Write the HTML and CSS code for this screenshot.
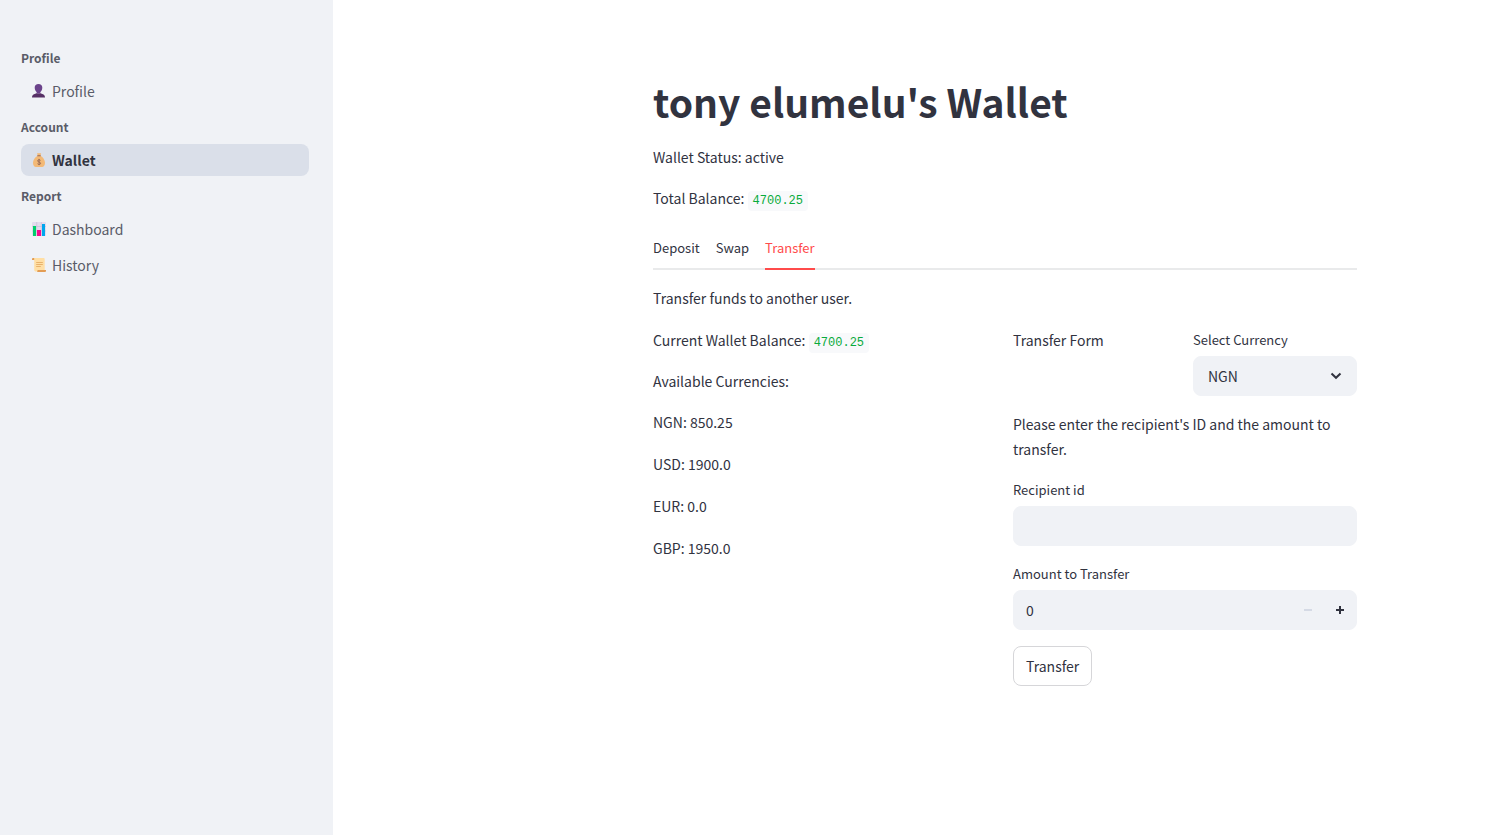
FILE: index.html
```html
<!DOCTYPE html>
<html lang="en">
<head>
<meta charset="utf-8">
<meta name="viewport" content="width=device-width, initial-scale=1">
<title>Wallet</title>
<link rel="stylesheet" href="styles.css">
</head>
<body>
<div class="app">
  <nav class="sidebar" aria-label="Main">
    <section class="nav-group">
      <h2 class="nav-heading">Profile</h2>
      <a class="nav-link" href="#profile">
        <svg class="nav-icon" viewBox="0 0 14 14" aria-hidden="true"><path fill="#6b438b" d="M6.500 0C4.200 0 2.700 1.300 2.700 3.600c0 1.900.8 3.700 2 4.600L4.500 9.700h4l-.2-1.500c1.200-.9 2-2.700 2-4.600C10.300 1.300 8.800 0 6.500 0z"/><path fill="#563065" d="M4.500 9.200 2 10.200C.7 10.800 0 12 0 13.500h13c0-1.500-.7-2.700-2-3.300L8.500 9.200c-1 .8-3 .8-4 0z"/></svg>
        <span>Profile</span>
      </a>
    </section>
    <section class="nav-group">
      <h2 class="nav-heading">Account</h2>
      <a class="nav-link nav-link-active" href="#wallet" aria-current="page">
        <svg class="nav-icon" viewBox="0 0 14 14" aria-hidden="true"><path fill="#f3b976" d="m5 0 1 .4L7 0l1 .4L9.200 0 8.500 2.700C11 4 13 7 13 9.800c0 2.700-1.200 4.200-3 4.200H4c-1.800 0-3-1.500-3-4.200C1 7 3 4 5.700 2.700z"/><rect x="5.200" y="2.200" width="3.600" height="1.100" rx=".5" fill="#9b6a55"/><path fill="none" stroke="#9b6a55" stroke-width="1" d="M8.500 7.400C8 6.500 5.600 6.500 5.600 7.900c0 1.500 3 .8 3 2.400 0 1.500-2.500 1.500-3.100.4M7.100 5.900v6.200"/></svg>
        <span>Wallet</span>
      </a>
    </section>
    <section class="nav-group">
      <h2 class="nav-heading">Report</h2>
      <a class="nav-link" href="#dashboard">
        <svg class="nav-icon" viewBox="0 0 14 14" aria-hidden="true"><rect width="14" height="14" rx="1" fill="#e3dced"/><path fill="none" stroke="#c9bed8" stroke-width=".7" d="M0 4.500h14M0 9h14M4.700 0v14M9.300 0v14"/><path fill="#00cf6c" d="M1 4h3v10H1z"/><path fill="#f70a8d" d="M5 8h4v6H5z"/><path fill="#00a6ed" d="M10 2h3v12h-3z"/></svg>
        <span>Dashboard</span>
      </a>
      <a class="nav-link" href="#history">
        <svg class="nav-icon" viewBox="0 0 14 14" aria-hidden="true"><path fill="#e39d54" d="M0 1.200C0 .4.500 0 1.300 0H4v2H0z"/><path fill="#ffdfa5" d="M2 0h9.500c.8 0 1.200.5 1.200 1.200V13.500H4c-1.200 0-1.800-.6-1.800-1.800V1.300C2.200.6 2.300.3 2 0z"/><path fill="#e39d54" d="M5.500 12H14v.8c0 .8-.5 1.200-1.200 1.200H5c.5-.5.700-1.200.5-2z"/><path fill="none" stroke="#e8b26b" stroke-width="1" d="M4.200 4.500h6.600M4.200 6.500h6.600M4.200 8.500h4.600"/></svg>
        <span>History</span>
      </a>
    </section>
  </nav>

  <main class="main">
    <div class="content">
      <h1 class="title">tony elumelu's Wallet</h1>
      <p>Wallet Status: active</p>
      <p>Total Balance: <code class="amount">4700.25</code></p>

      <div class="tabs" role="tablist">
        <button class="tab" type="button" role="tab" aria-selected="false">Deposit</button>
        <button class="tab" type="button" role="tab" aria-selected="false">Swap</button>
        <button class="tab tab-active" type="button" role="tab" aria-selected="true">Transfer</button>
      </div>

      <div class="panel" role="tabpanel">
        <p>Transfer funds to another user.</p>

        <div class="columns">
          <section class="stack">
            <p>Current Wallet Balance: <code class="amount">4700.25</code></p>
            <p>Available Currencies:</p>
            <ul class="currencies">
              <li>NGN: 850.25</li>
              <li>USD: 1900.0</li>
              <li>EUR: 0.0</li>
              <li>GBP: 1950.0</li>
            </ul>
          </section>

          <form class="stack">
            <div class="columns">
              <p>Transfer Form</p>
              <div class="field">
                <label class="label" for="currency">Select Currency</label>
                <div class="control">
                  <select class="select" id="currency">
                    <option>NGN</option>
                    <option>USD</option>
                    <option>EUR</option>
                    <option>GBP</option>
                  </select>
                  <svg class="chevron" viewBox="0 0 12 8" aria-hidden="true"><path d="m1.500 1.500 4.500 4.300 4.500-4.300"/></svg>
                </div>
              </div>
            </div>
            <p>Please enter the recipient's ID and the amount to transfer.</p>
            <div class="field">
              <label class="label" for="recipient">Recipient id</label>
              <div class="control"><input class="input" id="recipient" type="text"></div>
            </div>
            <div class="field">
              <label class="label" for="amount">Amount to Transfer</label>
              <div class="control">
                <input class="input" id="amount" type="text" inputmode="numeric" value="0">
                <button class="step" type="button" aria-label="Decrease" disabled><svg class="step-icon" viewBox="0 0 8 8" aria-hidden="true"><path d="M0 3h8v2H0z"/></svg></button>
                <button class="step" type="button" aria-label="Increase"><svg class="step-icon" viewBox="0 0 8 8" aria-hidden="true"><path d="M3 0h2v3h3v2H5v3H3V5H0V3h3z"/></svg></button>
              </div>
            </div>
            <button class="submit" type="button">Transfer</button>
          </form>
        </div>
      </div>
    </div>
  </main>
</div>
</body>
</html>
```
FILE: styles.css
```css
* {
  box-sizing: border-box;
}

body {
  margin: 0;
  background: #fff;
  color: #31333f;
  font: 14px/25px "Noto Sans CJK SC", "Noto Sans", sans-serif;
}

h1, h2, p, ul {
  margin: 0;
}

button, input, select {
  margin: 0;
  padding: 0;
  border: 0;
  background: none;
  color: inherit;
  font: inherit;
}

.app {
  display: flex;
  min-height: 100vh;
}

.sidebar {
  flex: 0 0 333px;
  padding: 40px 24px 40px 21px;
  background: #f0f2f6;
}

.nav-group {
  display: flex;
  flex-direction: column;
  gap: 4px;
  padding-bottom: 2px;
}

.nav-heading {
  padding: 7px 0 3px;
  color: #5a5c68;
  font-size: 12px;
  line-height: 21px;
  font-weight: 600;
}

.nav-link {
  display: flex;
  align-items: center;
  gap: 6px;
  height: 32px;
  padding: 0 11px;
  border-radius: 8px;
  color: #5a5c68;
  text-decoration: none;
}

.nav-link-active {
  background: #dadfe9;
  color: #31333f;
  font-weight: 600;
}

.nav-icon {
  width: 14px;
  height: 14px;
}

.main {
  flex: 1;
  min-width: 0;
  padding: 74px 0 74px 167px;
}

.content {
  display: flex;
  flex-direction: column;
  gap: 16px;
  max-width: 704px;
  margin: 0 auto;
}

.title {
  font-size: 39px;
  line-height: 55px;
  font-weight: 700;
}

.amount {
  padding: 3px 5px;
  border-radius: 4px;
  background: #f8f9fb;
  color: #09ab3b;
  font: 12px "Liberation Mono", monospace;
}

.tabs {
  display: flex;
  gap: 16px;
  box-shadow: inset 0 -2px #e9eaeb;
}

.tab {
  height: 43px;
  border-bottom: 2px solid transparent;
  font-size: 13px;
}

.tab-active {
  border-color: #ff4b4b;
  color: #ff4b4b;
}

.panel,
.currencies {
  display: flex;
  flex-direction: column;
  gap: 17px;
}

.currencies {
  padding: 0;
  list-style: none;
}

.columns {
  display: grid;
  grid-template-columns: 1fr 1fr;
  gap: 16px;
}

.stack {
  display: flex;
  flex-direction: column;
  gap: 16px;
}

.field {
  display: flex;
  flex-direction: column;
  gap: 5px;
}

.label {
  font-size: 13px;
  line-height: 23px;
}

.control {
  position: relative;
  display: flex;
  height: 40px;
  border: 1px solid #f0f2f6;
  border-radius: 8px;
  background: #f0f2f6;
}

.select {
  flex: 1;
  min-width: 0;
  padding: 0 36px 0 14px;
  appearance: none;
}

.chevron {
  position: absolute;
  top: 15px;
  right: 14px;
  width: 12px;
  height: 8px;
  fill: none;
  stroke: #31333f;
  stroke-width: 2;
  pointer-events: none;
}

.input {
  flex: 1;
  min-width: 0;
  padding: 0 12px;
}

.step {
  display: flex;
  align-items: center;
  justify-content: center;
  width: 32px;
}

.step:disabled {
  color: #d5dae5;
}

.step-icon {
  width: 8px;
  height: 8px;
  fill: currentColor;
}

.submit {
  align-self: flex-start;
  height: 40px;
  padding: 0 12px;
  border: 1px solid #d6d6d9;
  border-radius: 8px;
}
```
